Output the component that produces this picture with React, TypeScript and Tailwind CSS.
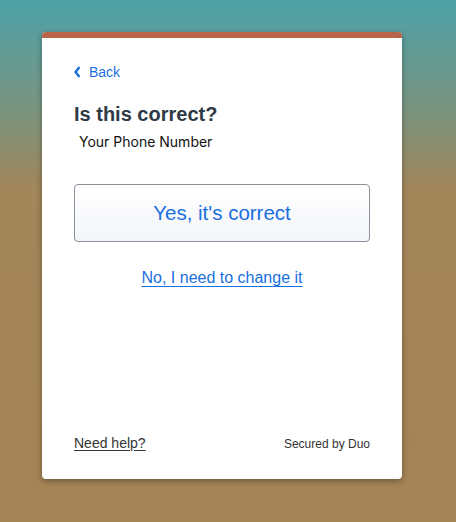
export default function App() {
    return (
        <div
            className="w-[456px] h-[522px] pt-8 pl-[42px] bg-[linear-gradient(to_bottom,#4ea3a9_0px,#7a9480_110px,#a3865a_190px,#a58456_522px)]"
            style={{ fontFamily: '"Liberation Sans", Arial, sans-serif' }}
        >
            <div className="w-[360px] h-[447px] bg-white rounded-[4px] overflow-hidden shadow-[0_2px_6px_rgba(0,0,0,0.35)] flex flex-col">
                <div className="h-[6px] bg-[#b8654a]" />
                <div className="flex-1 px-8 pt-[26px] pb-[25px] flex flex-col">
                    <a href="#" className="flex items-center gap-[8px] text-[14px] text-[#1a6fe0] leading-none h-[16px]">
                        <svg width="7" height="12" viewBox="0 0 7 12" fill="none">
                            <path d="M5.5 1L1.5 6L5.5 11" stroke="#1a6fe0" strokeWidth="2.4" />
                        </svg>
                        Back
                    </a>
                    <h1 className="mt-[22px] text-[20px] font-bold text-[#2e3a45] leading-[24px]">
                        Is this correct?
                    </h1>
                    <p
                        className="mt-[6px] ml-[5px] text-[14px] text-[#111] leading-[20px]"
                        style={{ fontFamily: 'Inter, "Noto Sans", sans-serif' }}
                    >
                        Your Phone Number
                    </p>
                    <button className="mt-[32px] h-[58px] w-full border border-[#8b919a] rounded-[4px] bg-[linear-gradient(to_bottom,#ffffff,#f3f5f8)] text-[20.5px] text-[#1a6fe0]">
                        Yes, it's correct
                    </button>
                    <div className="mt-[24px] text-center">
                        <a href="#" className="text-[16px] text-[#1a6fe0] underline underline-offset-[3px]">
                            No, I need to change it
                        </a>
                    </div>
                    <div className="mt-auto flex items-end justify-between">
                        <a href="#" className="text-[14px] text-[#333] underline underline-offset-[2px]">
                            Need help?
                        </a>
                        <span className="text-[12px] text-[#333] mb-[1px]">Secured by Duo</span>
                    </div>
                </div>
            </div>
        </div>
    );
}
